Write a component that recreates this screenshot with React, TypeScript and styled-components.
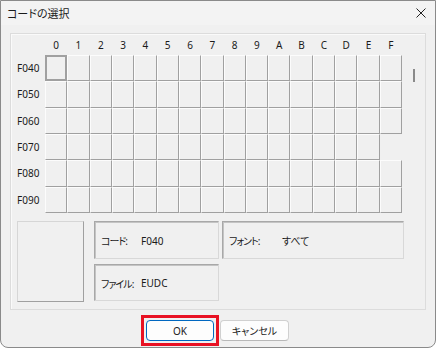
import React from "react";
import styled, { createGlobalStyle } from "styled-components";

const GlobalStyle = createGlobalStyle`
  html, body {
    margin: 0;
    padding: 0;
    background: #ffffff;
  }
`;

const Window = styled.div`
  width: 436px;
  height: 348px;
  box-sizing: border-box;
  border: 1px solid #8a8a8a;
  border-radius: 0 0 8px 8px;
  background: #f0f0f0;
  display: flex;
  flex-direction: column;
  overflow: hidden;
  font-family: "Noto Sans", "Noto Sans CJK JP", sans-serif;
  font-feature-settings: "palt";
  color: #1a1a1a;
`;

const TitleBar = styled.div`
  height: 24px;
  display: flex;
  align-items: center;
  justify-content: space-between;
  padding: 0 8px 0 6px;
  background: #f3f3f3;
  font-size: 11px;
`;

const CloseButton = styled.div`
  width: 12px;
  height: 12px;
  display: flex;
  align-items: center;
  justify-content: center;
`;

const Panel = styled.div`
  margin: 8px 9px 0 9px;
  height: 277px;
  box-sizing: border-box;
  border: 1px solid #dcdcdc;
  box-shadow: inset 1px 1px 0 #fafafa;
  display: flex;
  flex-direction: column;
`;

const ChartRow = styled.div`
  display: flex;
`;

const Chart = styled.div`
  width: 391px;
  height: 179px;
  display: grid;
  grid-template-columns: 34px repeat(16, 1fr);
  grid-template-rows: 21px repeat(6, 1fr);
  font-size: 10px;
`;

const ColHead = styled.div`
  display: flex;
  align-items: center;
  justify-content: center;
  padding-top: 1px;
`;

const RowHead = styled.div`
  display: flex;
  align-items: center;
  padding-left: 6px;
`;

const Cell = styled.div<{ $selected?: boolean; $blank?: boolean }>`
  box-sizing: border-box;
  border: ${({ $selected }) => ($selected ? "2px" : "1px")} solid;
  border-color: ${({ $selected, $blank }) =>
    $blank
      ? "transparent"
      : $selected
      ? "#a0a0a0"
      : "#fcfcfc #a0a0a0 #a0a0a0 #fcfcfc"};
  background: #f0f0f0;
`;

const ScrollTrack = styled.div`
  flex: 1;
  display: flex;
  justify-content: center;
`;

const ScrollThumb = styled.div`
  width: 2px;
  height: 13px;
  margin-top: 35px;
  background: #8a8a8a;
`;

const Lower = styled.div`
  display: flex;
  padding: 8px 0 0 6px;
  gap: 10px;
`;

const Preview = styled.div`
  width: 67px;
  height: 81px;
  box-sizing: border-box;
  border: 1px solid;
  border-color: #d6d6d6 #a0a0a0 #a0a0a0 #d6d6d6;
`;

const InfoGrid = styled.div`
  display: grid;
  grid-template-columns: 125px 182px;
  grid-template-rows: 38px 37px;
  column-gap: 3px;
  row-gap: 5px;
`;

const InfoBox = styled.div`
  box-sizing: border-box;
  border: 1px solid;
  border-color: #a8a8a8 #d8d8d8 #d8d8d8 #a8a8a8;
  box-shadow: inset 1px 1px 0 #c4c4c4;
  display: flex;
  align-items: center;
  padding: 1px 0 0 6px;
  font-size: 10px;
  white-space: nowrap;
`;

const InfoLabel = styled.span<{ $width: number }>`
  width: ${({ $width }) => $width}px;
  flex-shrink: 0;
  letter-spacing: -1px;
`;

const Footer = styled.div`
  display: flex;
  justify-content: center;
  align-items: center;
  gap: 1px;
  padding: 5px 6px 0 0;
`;

const FocusFrame = styled.div`
  border: 3px solid #e81123;
  padding: 2px;
  display: flex;
`;

const Button = styled.button<{ $primary?: boolean }>`
  width: ${({ $primary }) => ($primary ? "68px" : "69px")};
  height: 21px;
  padding: 0;
  box-sizing: border-box;
  border: 1px solid ${({ $primary }) => ($primary ? "#0067c0" : "#d0d0d0")};
  border-bottom-color: ${({ $primary }) => ($primary ? "#0067c0" : "#b8b8b8")};
  border-radius: 4px;
  background: #fdfdfd;
  font-family: inherit;
  font-feature-settings: "palt";
  font-size: 10px;
  color: #1a1a1a;
`;

const columns = ["0", "1", "2", "3", "4", "5", "6", "7", "8", "9", "A", "B", "C", "D", "E", "F"];
const rows = ["F040", "F050", "F060", "F070", "F080", "F090"];

export default function App() {
  return (
    <>
      <GlobalStyle />
      <Window>
        <TitleBar>
          <span>コードの選択</span>
          <CloseButton>
            <svg width="10" height="10" viewBox="0 0 10 10">
              <path d="M0.5 0.5L9.5 9.5M9.5 0.5L0.5 9.5" stroke="#222" strokeWidth="1" />
            </svg>
          </CloseButton>
        </TitleBar>

        <Panel>
          <ChartRow>
            <Chart>
              <div />
              {columns.map((c) => (
                <ColHead key={c}>{c}</ColHead>
              ))}
              {rows.map((r, ri) => (
                <React.Fragment key={r}>
                  <RowHead>{r}</RowHead>
                  {columns.map((c, ci) => (
                    <Cell
                      key={c}
                      $selected={ri === 0 && ci === 0}
                      $blank={ri === 3 && ci === 15}
                    />
                  ))}
                </React.Fragment>
              ))}
            </Chart>
            <ScrollTrack>
              <ScrollThumb />
            </ScrollTrack>
          </ChartRow>

          <Lower>
            <Preview />
            <InfoGrid>
              <InfoBox>
                <InfoLabel $width={40}>コード:</InfoLabel>
                <span>F040</span>
              </InfoBox>
              <InfoBox>
                <InfoLabel $width={53}>フォント:</InfoLabel>
                <span>すべて</span>
              </InfoBox>
              <InfoBox>
                <InfoLabel $width={40}>ファイル:</InfoLabel>
                <span>EUDC</span>
              </InfoBox>
            </InfoGrid>
          </Lower>
        </Panel>

        <Footer>
          <FocusFrame>
            <Button $primary>OK</Button>
          </FocusFrame>
          <Button>キャンセル</Button>
        </Footer>
      </Window>
    </>
  );
}
